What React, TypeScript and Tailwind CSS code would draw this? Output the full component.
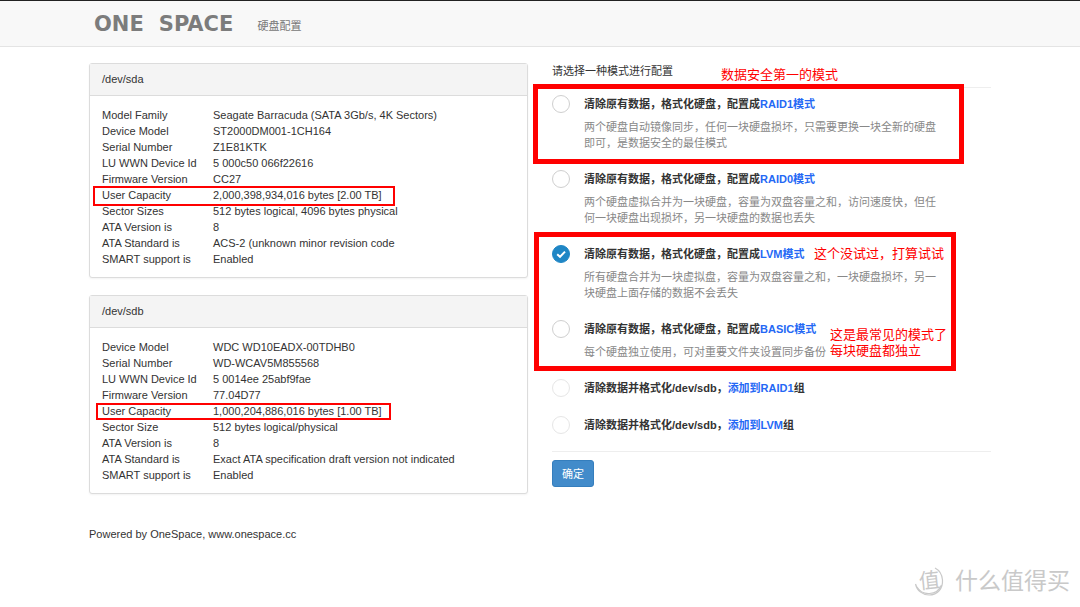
import { useState, type ReactNode } from "react";

interface Disk {
  path: string;
  /** Key/value pairs as reported by smartctl. */
  info: [string, string][];
  /** Inset of the red frame around the capacity row. */
  frame: string;
}

const disks: Disk[] = [
  {
    path: "/dev/sda",
    frame: "-left-[9px] -top-px h-5 w-[302px]",
    info: [
      ["Model Family", "Seagate Barracuda (SATA 3Gb/s, 4K Sectors)"],
      ["Device Model", "ST2000DM001-1CH164"],
      ["Serial Number", "Z1E81KTK"],
      ["LU WWN Device Id", "5 000c50 066f22616"],
      ["Firmware Version", "CC27"],
      ["User Capacity", "2,000,398,934,016 bytes [2.00 TB]"],
      ["Sector Sizes", "512 bytes logical, 4096 bytes physical"],
      ["ATA Version is", "8"],
      ["ATA Standard is", "ACS-2 (unknown minor revision code"],
      ["SMART support is", "Enabled"],
    ],
  },
  {
    path: "/dev/sdb",
    frame: "-left-[6px] top-0 h-[17px] w-[295px]",
    info: [
      ["Device Model", "WDC WD10EADX-00TDHB0"],
      ["Serial Number", "WD-WCAV5M855568"],
      ["LU WWN Device Id", "5 0014ee 25abf9fae"],
      ["Firmware Version", "77.04D77"],
      ["User Capacity", "1,000,204,886,016 bytes [1.00 TB]"],
      ["Sector Size", "512 bytes logical/physical"],
      ["ATA Version is", "8"],
      ["ATA Standard is", "Exact ATA specification draft version not indicated"],
      ["SMART support is", "Enabled"],
    ],
  },
];

function DiskCard({ disk }: { disk: Disk }) {
  return (
    <section className="rounded-[3px] border border-[#dcdcdc] bg-white shadow-xs">
      <h2 className="border-b border-[#dcdcdc] bg-[#f4f4f4] px-3 py-2 leading-[15px]">{disk.path}</h2>
      <div className="px-3 pt-[11px] pb-2.5">
        <table className="w-full table-fixed border-collapse text-left">
          <tbody>
            {disk.info.map(([name, value]) => (
              <tr key={name} className="relative h-4">
                <th scope="row" className="w-[111px] p-0 font-normal">
                  {name}
                  {name === "User Capacity" && (
                    <span className={`absolute border-2 border-[#f00] ${disk.frame}`} />
                  )}
                </th>
                <td className="p-0">{value}</td>
              </tr>
            ))}
          </tbody>
        </table>
      </div>
    </section>
  );
}

interface OptionProps {
  id: string;
  selected: string;
  onSelect: (id: string) => void;
  title: ReactNode;
  desc?: string;
  faded?: boolean;
}

function Option({ id, selected, onSelect, title, desc, faded }: OptionProps) {
  return (
    <div className="flex items-start gap-[14px]">
      <span className="relative size-[18px] shrink-0">
        <input
          type="radio"
          id={id}
          name="mode"
          checked={selected === id}
          onChange={() => onSelect(id)}
          className={`block size-[18px] appearance-none rounded-full border bg-white checked:border-[#1f86c5] checked:bg-[#1f86c5] ${
            faded ? "border-[#e6e6e6]" : "border-[#cfcfcf]"
          }`}
        />
        {selected === id && (
          <svg viewBox="0 0 18 18" className="pointer-events-none absolute inset-0 size-full" fill="none" aria-hidden="true">
            <path d="M5.2 9.2 L8 11.8 L13 6.6" stroke="#fff" strokeWidth="2" />
          </svg>
        )}
      </span>
      <div className="flex-1 pr-12">
        <label htmlFor={id} className="block leading-[18px] font-bold">
          {title}
        </label>
        {desc && <p className="mt-1.5 text-[#888]">{desc}</p>}
      </div>
    </div>
  );
}

function Mode({ children }: { children: ReactNode }) {
  return <span className="text-[#2468f5]">{children}</span>;
}

function Note({ className, children }: { className: string; children: ReactNode }) {
  return (
    <span className={`absolute text-[13px] whitespace-nowrap text-[#f00] ${className}`}>{children}</span>
  );
}

function Watermark() {
  return (
    <div className="absolute right-2.5 bottom-2.5 flex items-center gap-2.5 text-[#c9c9c9]">
      <span className="relative flex size-8 items-center justify-center">
        <svg viewBox="0 0 32 32" className="absolute inset-0 size-full" fill="none" stroke="currentColor" aria-hidden="true">
          <path d="M2.5 19 C4 26 10 30 16 30 C25 30 30 23 29.5 15 C29 9 26 5 22 3" strokeWidth="1.2" />
          <path d="M4 22 C9 31 24 31 28.5 20" strokeWidth="1.2" />
        </svg>
        <span className="-rotate-6 text-[21px] leading-8">值</span>
      </span>
      <span className="text-[23px] leading-8">什么值得买</span>
    </div>
  );
}

export default function App() {
  const [mode, setMode] = useState("lvm");
  const common = { selected: mode, onSelect: setMode };

  return (
    <div className="relative min-h-screen bg-white font-['Liberation_Sans','Noto_Sans_CJK_SC',sans-serif] text-[11px] leading-4 text-[#333]">
      <header className="border-t border-b border-t-[#222] border-b-[#e4e4e4] bg-[#f8f8f8]">
        <div className="mx-auto flex h-[45px] max-w-[902px] items-center gap-6 px-[5px]">
          <a href="/" className="flex gap-[15px] font-['DejaVu_Sans',sans-serif] text-[21px] font-bold text-[#7c7c7c]">
            <span>ONE</span>
            <span>SPACE</span>
          </a>
          <a href="/disks" className="pt-1 text-[#777]">
            硬盘配置
          </a>
        </div>
      </header>

      <main className="mx-auto grid max-w-[902px] grid-cols-2 gap-6 pt-4">
        <div className="flex flex-col gap-[17px]">
          {disks.map((disk) => (
            <DiskCard key={disk.path} disk={disk} />
          ))}
        </div>

        <form onSubmit={(e) => e.preventDefault()}>
          <h1 className="relative border-b border-[#eee] pb-2">
            请选择一种模式进行配置
            <Note className="top-1 left-[169px]">数据安全第一的模式</Note>
          </h1>

          <div className="flex flex-col gap-[19px] border-b border-[#eee] pt-[7px] pb-[17px]">
            <div className="relative">
              <Option
                {...common}
                id="raid1"
                title={<>清除原有数据，格式化硬盘，配置成<Mode>RAID1模式</Mode></>}
                desc="两个硬盘自动镜像同步，任何一块硬盘损坏，只需要更换一块全新的硬盘即可，是数据安全的最佳模式"
              />
              <div className="pointer-events-none absolute -top-[11px] right-[27px] -bottom-[13px] -left-[19px] border-[5px] border-[#f00]" />
            </div>
            <Option
              {...common}
              id="raid0"
              title={<>清除原有数据，格式化硬盘，配置成<Mode>RAID0模式</Mode></>}
              desc="两个硬盘虚拟合并为一块硬盘，容量为双盘容量之和，访问速度快，但任何一块硬盘出现损坏，另一块硬盘的数据也丢失"
            />
            <div className="relative flex flex-col gap-[19px]">
              <Option
                {...common}
                id="lvm"
                title={<>清除原有数据，格式化硬盘，配置成<Mode>LVM模式</Mode></>}
                desc="所有硬盘合并为一块虚拟盘，容量为双盘容量之和，一块硬盘损坏，另一块硬盘上面存储的数据不会丢失"
              />
              <Option
                {...common}
                id="basic"
                title={<>清除原有数据，格式化硬盘，配置成<Mode>BASIC模式</Mode></>}
                desc="每个硬盘独立使用，可对重要文件夹设置同步备份"
              />
              <div className="pointer-events-none absolute -top-[13px] right-[35px] -bottom-[11px] -left-[18px] border-[5px] border-[#f00]" />
              <Note className="top-px left-[262px]">这个没试过，打算试试</Note>
              <Note className="top-[82px] left-[278px]">
                这是最常见的模式了
                <br />
                每块硬盘都独立
              </Note>
            </div>
            <Option
              {...common}
              id="add-raid1"
              faded
              title={<>清除数据并格式化/dev/sdb，<Mode>添加到RAID1</Mode>组</>}
            />
            <Option
              {...common}
              id="add-lvm"
              faded
              title={<>清除数据并格式化/dev/sdb，<Mode>添加到LVM</Mode>组</>}
            />
          </div>

          <button
            type="submit"
            className="mt-2 h-[27px] rounded-[3px] border border-[#357ebd] bg-[#428bca] px-[9px] text-white"
          >
            确定
          </button>
        </form>
      </main>

      <footer className="mx-auto mt-8 max-w-[902px]">Powered by OneSpace, www.onespace.cc</footer>
      <Watermark />
    </div>
  );
}
